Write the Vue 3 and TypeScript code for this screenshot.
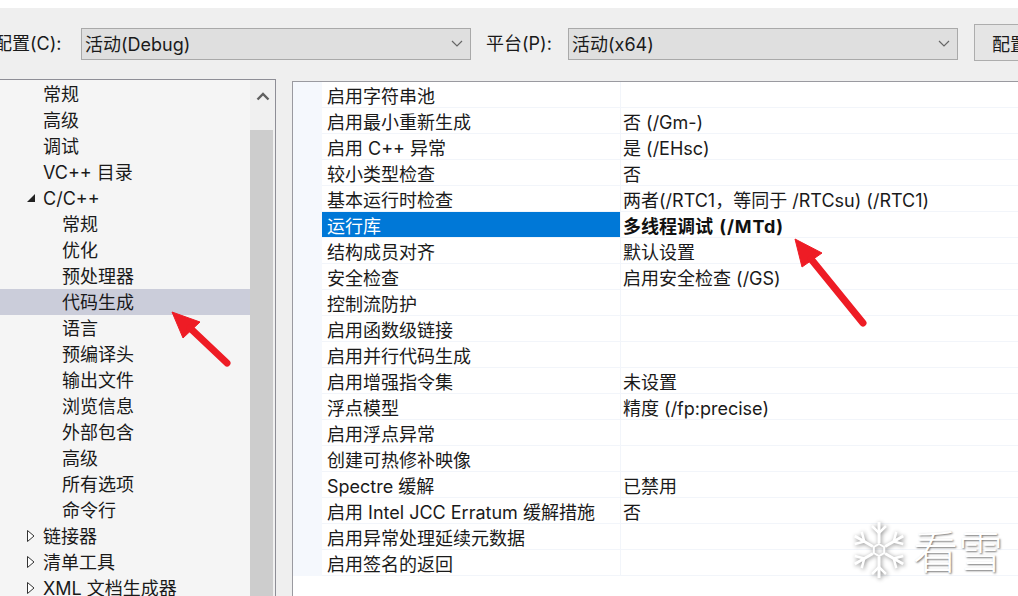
<script setup lang="ts">
interface TreeRow { label: string; level: number; mark?: 'open' | 'closed'; selected?: boolean }
interface PropRow { name: string; value: string; flag?: string; active?: boolean }

const treeRows: TreeRow[] = [
  { label: '常规', level: 1 },
  { label: '高级', level: 1 },
  { label: '调试', level: 1 },
  { label: 'VC++ 目录', level: 1 },
  { label: 'C/C++', level: 1, mark: 'open' },
  { label: '常规', level: 2 },
  { label: '优化', level: 2 },
  { label: '预处理器', level: 2 },
  { label: '代码生成', level: 2, selected: true },
  { label: '语言', level: 2 },
  { label: '预编译头', level: 2 },
  { label: '输出文件', level: 2 },
  { label: '浏览信息', level: 2 },
  { label: '外部包含', level: 2 },
  { label: '高级', level: 2 },
  { label: '所有选项', level: 2 },
  { label: '命令行', level: 2 },
  { label: '链接器', level: 1, mark: 'closed' },
  { label: '清单工具', level: 1, mark: 'closed' },
  { label: 'XML 文档生成器', level: 1, mark: 'closed' },
]

const propRows: PropRow[] = [
  { name: '启用字符串池', value: '' },
  { name: '启用最小重新生成', value: '否 (/Gm-)' },
  { name: '启用 C++ 异常', value: '是 (/EHsc)' },
  { name: '较小类型检查', value: '否' },
  { name: '基本运行时检查', value: '两者(/RTC1，等同于 /RTCsu) (/RTC1)' },
  { name: '运行库', value: '多线程调试 ', flag: '(/MTd)', active: true },
  { name: '结构成员对齐', value: '默认设置' },
  { name: '安全检查', value: '启用安全检查 (/GS)' },
  { name: '控制流防护', value: '' },
  { name: '启用函数级链接', value: '' },
  { name: '启用并行代码生成', value: '' },
  { name: '启用增强指令集', value: '未设置' },
  { name: '浮点模型', value: '精度 (/fp:precise)' },
  { name: '启用浮点异常', value: '' },
  { name: '创建可热修补映像', value: '' },
  { name: 'Spectre 缓解', value: '已禁用' },
  { name: '启用 Intel JCC Erratum 缓解措施', value: '否' },
  { name: '启用异常处理延续元数据', value: '' },
  { name: '启用签名的返回', value: '' },
]

const flakeArms = [0, 60, 120, 180, 240, 300]
</script>

<template>
  <div class="page">
    <div class="dialog">
      <div class="toolbar">
        <span class="label first">配置(C):</span>
        <div class="combo">
          <span>活动(Debug)</span>
          <svg class="chev" width="12" height="8" viewBox="0 0 12 8"><path d="M1 1l5 5 5-5" fill="none" stroke="#666" stroke-width="1.2" /></svg>
        </div>
        <span class="label second">平台(P):</span>
        <div class="combo">
          <span>活动(x64)</span>
          <svg class="chev" width="12" height="8" viewBox="0 0 12 8"><path d="M1 1l5 5 5-5" fill="none" stroke="#666" stroke-width="1.2" /></svg>
        </div>
        <button class="manager" type="button">配置管理器(O)...</button>
      </div>

      <div class="panes">
        <div class="tree">
          <div class="tree-list">
            <div
              v-for="(row, i) in treeRows"
              :key="i"
              class="tree-row"
              :class="[`lv${row.level}`, { selected: row.selected }]"
            >
              <svg v-if="row.mark === 'open'" class="mark" width="10" height="10" viewBox="0 0 10 10"><path d="M9 1v8H1z" fill="#222" /></svg>
              <svg v-else-if="row.mark === 'closed'" class="mark" width="10" height="14" viewBox="0 0 10 14"><path d="M1.5 1.5L8 7l-6.500 5.500z" fill="#fff" stroke="#333" stroke-width="1" /></svg>
              <span>{{ row.label }}</span>
            </div>
          </div>
          <div class="scroll">
            <svg class="up" width="14" height="9" viewBox="0 0 14 9"><path d="M1.500 7.500L7 2l5.500 5.500" fill="none" stroke="#606060" stroke-width="2.400" /></svg>
            <div class="thumb"></div>
          </div>
        </div>

        <div class="props">
          <div class="prop-table">
            <div v-for="(row, i) in propRows" :key="i" class="prop-row" :class="{ active: row.active }">
              <div class="gutter"></div>
              <div class="name">{{ row.name }}</div>
              <div class="value">{{ row.value }}<span v-if="row.flag" class="flag">{{ row.flag }}</span></div>
            </div>
          </div>
        </div>
      </div>
    </div>

    <svg class="arrows" width="1018" height="596" viewBox="0 0 1018 596">
      <g fill="#ee1c25" stroke="#ee1c25" stroke-linejoin="round">
        <path d="M172 312L200 322 183 338z" stroke-width="1" />
        <path d="M190 328L227 363" stroke-width="7" stroke-linecap="round" fill="none" />
        <path d="M795 239L822 253 802 267z" stroke-width="1" />
        <path d="M811 259L863 323" stroke-width="7" stroke-linecap="round" fill="none" />
      </g>
    </svg>

    <div class="watermark">
      <svg class="flake" width="54" height="60" viewBox="-27 -30 54 60">
        <g fill="none" stroke="#fff" stroke-width="3">
          <g v-for="a in flakeArms" :key="a" :transform="`rotate(${a})`">
            <path d="M0 -7V-28" />
            <path d="M-7 -24L0 -17L7 -24" stroke-width="2.500" />
          </g>
          <path d="M0 -6L5.200 -3V3L0 6L-5.200 3V-3z" stroke-width="2" />
        </g>
      </svg>
      <span class="wm-text">看雪</span>
    </div>
  </div>
</template>

<style scoped>
.page {
  position: relative;
  width: 1018px;
  height: 596px;
  overflow: hidden;
  background: #fff;
  padding-top: 8px;
  box-sizing: border-box;
  font-family: Inter, "Noto Sans CJK SC", sans-serif;
  font-size: 18px;
  color: #1a1a1a;
}
.dialog {
  height: 588px;
  background: #efefef;
  display: flex;
  flex-direction: column;
}
.toolbar {
  height: 71px;
  display: flex;
  align-items: center;
  flex: none;
  padding-top: 1px;
  box-sizing: border-box;
  white-space: nowrap;
}
.label { line-height: 36px; }
.label.first { margin-left: -6px; width: 87px; flex: none; }
.label.second { margin-left: 15px; width: 82px; flex: none; }
.combo {
  width: 390px;
  height: 32px;
  flex: none;
  box-sizing: border-box;
  border: 1px solid #a9a9a9;
  background: #dfdfdf;
  display: flex;
  align-items: center;
  justify-content: space-between;
  padding: 0 7px 0 3px;
  line-height: 33px;
}
.manager {
  margin-left: 16px;
  margin-bottom: 3px;
  width: 120px;
  height: 37px;
  flex: none;
  border: 1px solid #adadad;
  background: #e5e5e5;
  font: inherit;
  color: inherit;
  text-align: left;
  padding: 0 0 0 17px;
  white-space: nowrap;
}
.panes {
  flex: 1;
  display: flex;
  min-height: 0;
}
.tree {
  width: 277px;
  flex: none;
  margin-left: -1px;
  box-sizing: border-box;
  border: 1px solid #8e8e96;
  border-bottom: none;
  background: #f5f5f5;
  display: flex;
  overflow: hidden;
}
.tree-list {
  width: 250px;
  flex: none;
  padding-top: 1px;
}
.tree-row {
  position: relative;
  height: 26px;
  line-height: 28px;
  white-space: nowrap;
}
.tree-row.lv1 { padding-left: 43px; }
.tree-row.lv2 { padding-left: 62px; }
.tree-row.selected { background: #cbcdda; }
.mark {
  position: absolute;
  left: 26px;
  top: 50%;
  transform: translateY(-50%);
}
.scroll {
  position: relative;
  flex: 1;
  background: #f0f0f0;
  display: flex;
  flex-direction: column;
  padding-right: 2px;
}
.up {
  position: absolute;
  left: 6px;
  top: 12px;
}
.thumb {
  margin-top: 50px;
  flex: 1;
  background: #cdcdcd;
}
.props {
  flex: 1;
  margin-left: 16px;
  margin-top: 2px;
  background: #fff;
  min-width: 0;
  border-top: 1px solid #9a9aa0;
  border-left: 1px solid #9a9aa0;
}
.prop-table {
  display: grid;
  grid-auto-rows: 26px;
}
.prop-row {
  display: grid;
  grid-template-columns: 29px 298px 1fr;
}
.gutter { background: #f5f8fd; }
.name, .value {
  line-height: 29px;
  height: 26px;
  box-sizing: border-box;
  border-bottom: 1px solid #f2f5fa;
  white-space: pre;
  overflow: hidden;
}
.name { padding-left: 5px; }
.value { padding-left: 2px; border-left: 1px solid #f2f5fa; }
.prop-row.active .name {
  background: #0078d7;
  color: #fff;
}
.prop-row.active .value { font-weight: 700; color: #111; }
.flag { letter-spacing: 0.9px; margin-left: 2px; }
.arrows {
  position: absolute;
  left: 0;
  top: 0;
  pointer-events: none;
}
.watermark {
  position: absolute;
  left: 852px;
  top: 520px;
  display: flex;
  align-items: center;
  gap: 8px;
}
.flake { filter: drop-shadow(1px 1px 2px rgba(0, 0, 0, 0.45)); flex: none; }
.wm-text {
  font-family: "Noto Sans CJK SC", sans-serif;
  font-weight: 300;
  font-size: 45px;
  line-height: 58px;
  margin-left: -1px;
  color: #fff;
  text-shadow: 1px 1px 2px rgba(0, 0, 0, 0.55);
}
</style>
